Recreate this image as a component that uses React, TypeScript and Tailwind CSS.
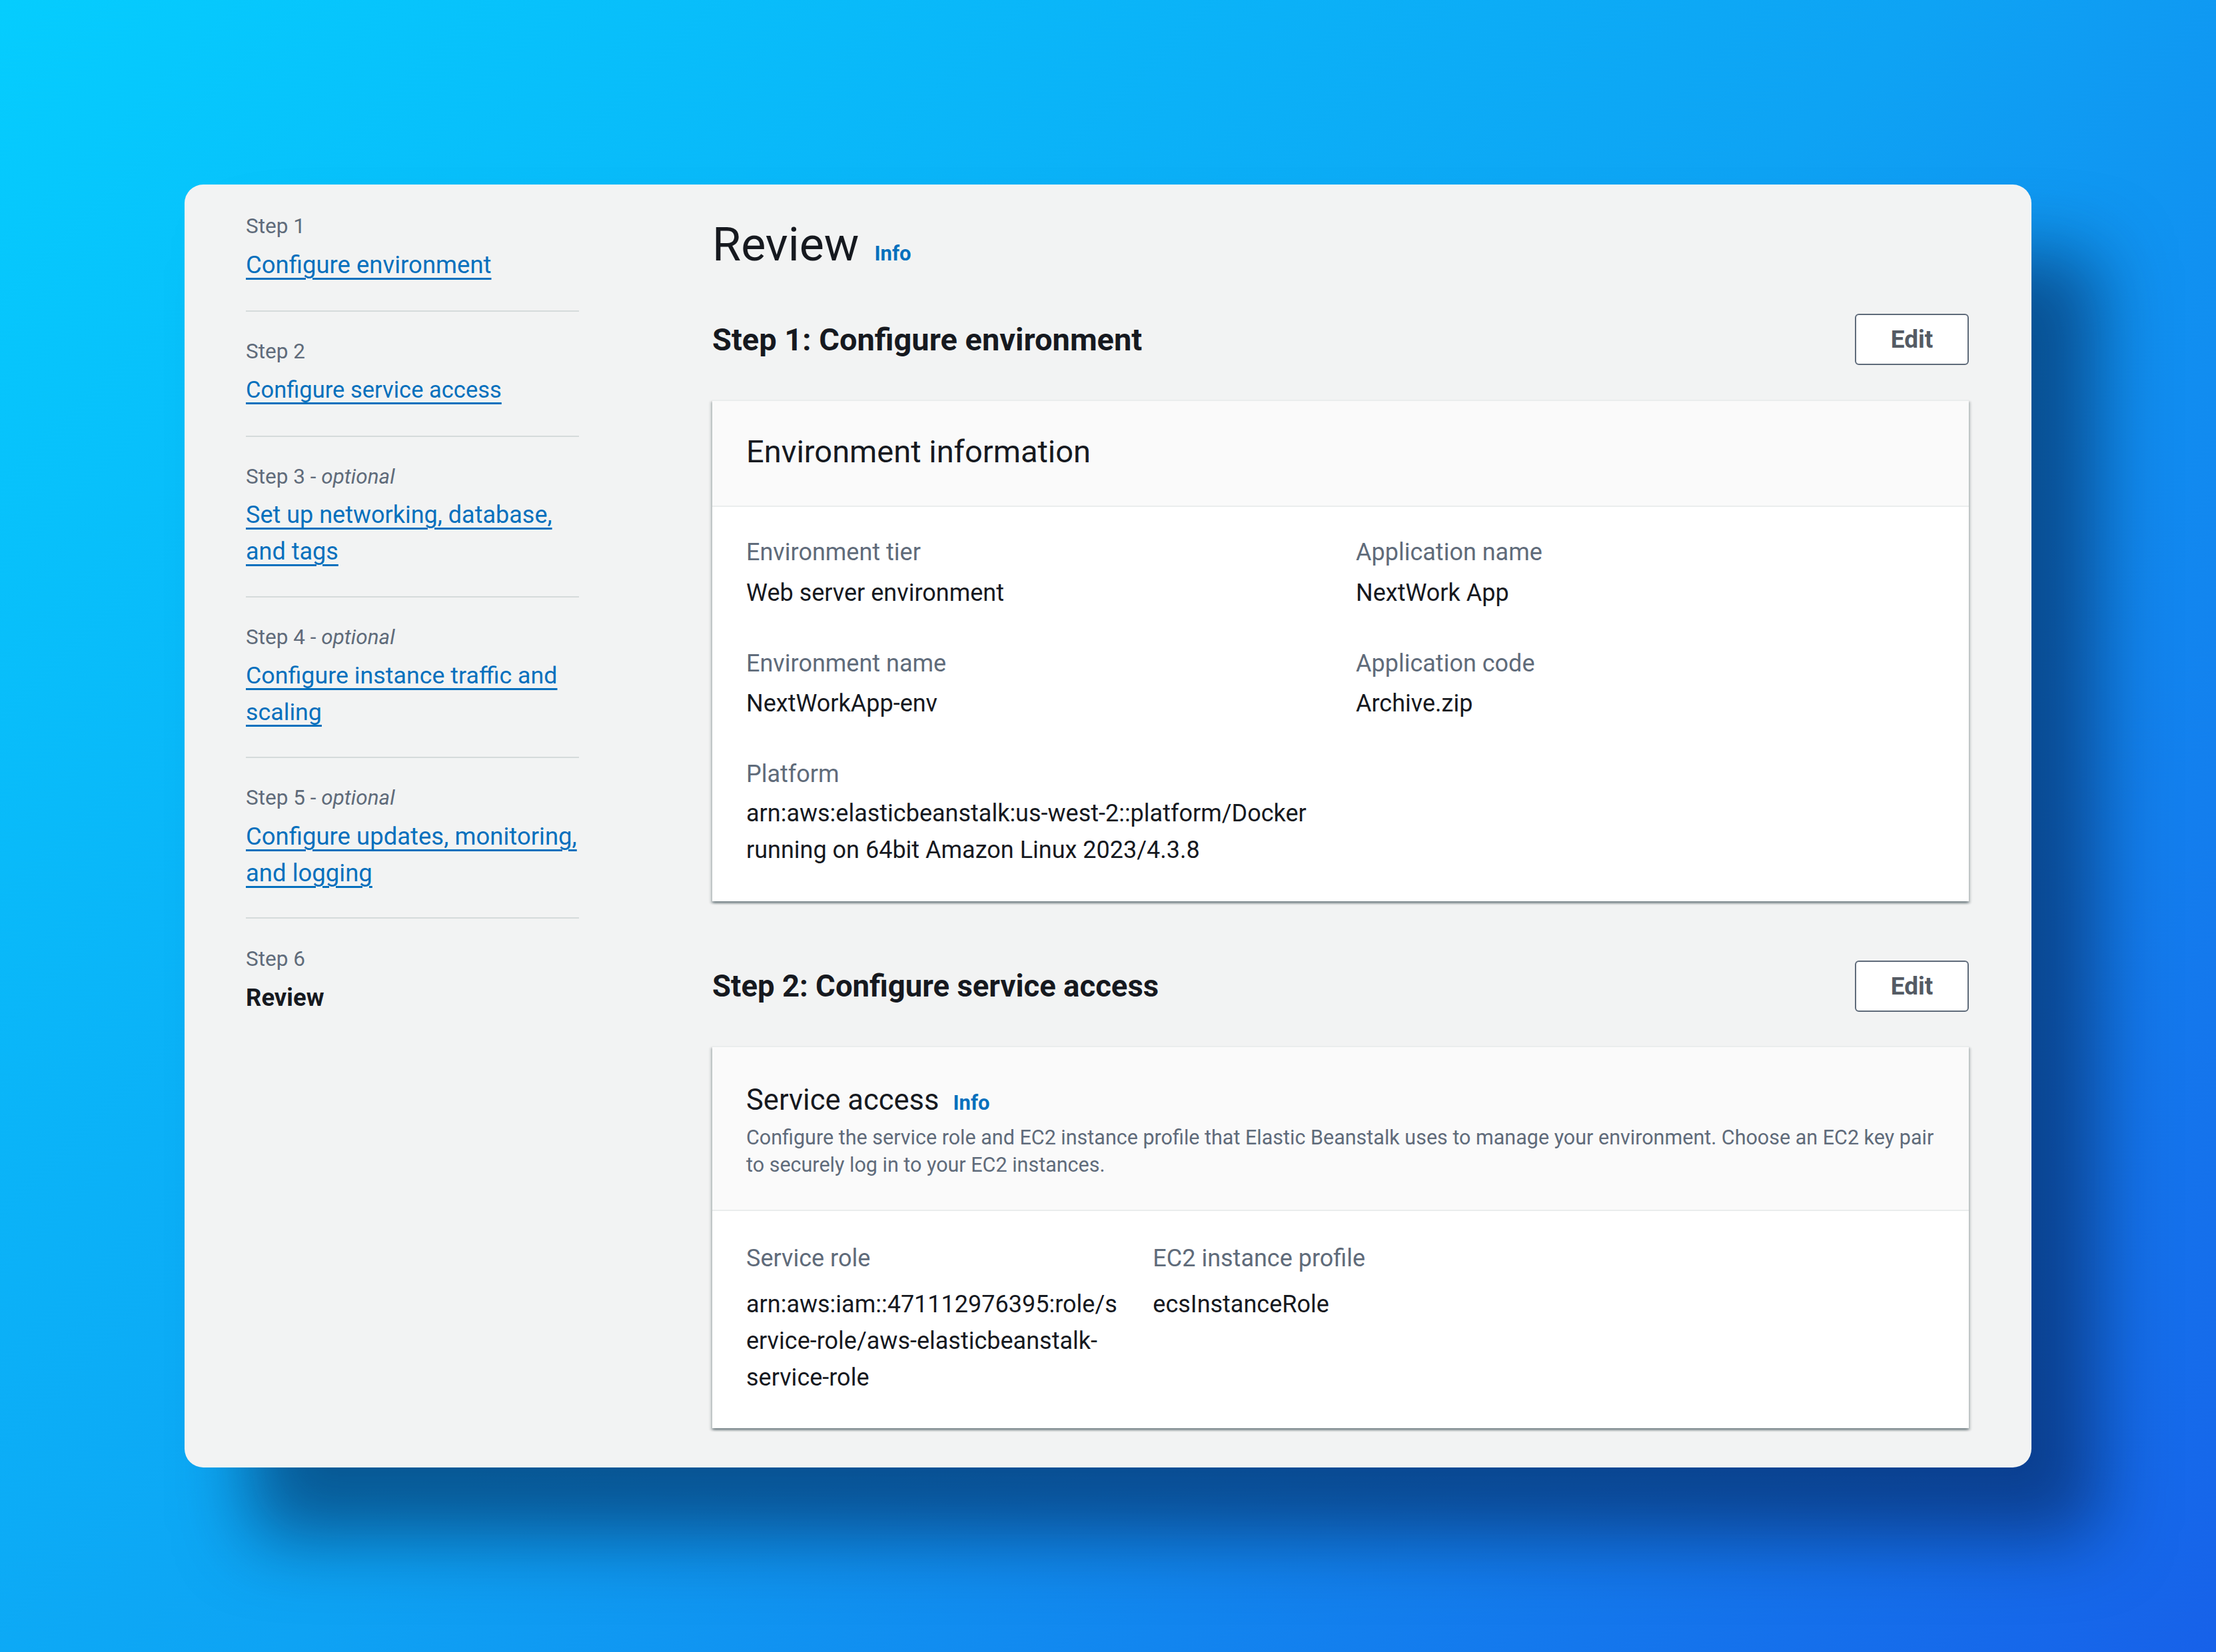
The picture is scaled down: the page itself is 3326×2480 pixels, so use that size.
import React from "react";

type NavItem = {
  step: string;
  optional?: boolean;
  lines: string[];
  current?: boolean;
  size: string;
};

const navItems: NavItem[] = [
  { step: "Step 1", lines: ["Configure environment"], size: "text-[36.5px]" },
  { step: "Step 2", lines: ["Configure service access"], size: "text-[34.5px]" },
  { step: "Step 3", optional: true, lines: ["Set up networking, database,", "and tags"], size: "text-[36px]" },
  { step: "Step 4", optional: true, lines: ["Configure instance traffic and", "scaling"], size: "text-[35.8px]" },
  { step: "Step 5", optional: true, lines: ["Configure updates, monitoring,", "and logging"], size: "text-[36.5px]" },
  { step: "Step 6", lines: ["Review"], current: true, size: "text-[36.5px]" },
];

function SideNav() {
  return (
    <nav className="w-[792px] shrink-0 pl-[92px] pt-[41px]">
      <ul className="w-[500px]">
        {navItems.map((item, i) => {
          const last = i === navItems.length - 1;
          const multi = item.lines.length > 1;
          const pad = last
            ? "pt-[39px]"
            : (i === 0 ? "" : "pt-[38px] ") +
              (multi ? "pb-[39px]" : "pb-[41px]") +
              " border-b-2 border-[#d5dbdb]";
          return (
            <li key={item.step} className={pad}>
              <div className="text-[31.5px] leading-[44px] text-[#5f6b7a] whitespace-nowrap">
                {item.step}
                {item.optional ? (
                  <>
                    {" - "}
                    <i>optional</i>
                  </>
                ) : null}
              </div>
              <div className={"mt-[8px] leading-[55px] whitespace-nowrap " + item.size}>
                {item.current ? (
                  <span className="font-bold text-[#16191f]">{item.lines[0]}</span>
                ) : (
                  <a
                    href="#"
                    className="text-[#0670bd] underline decoration-3 underline-offset-[7px]"
                  >
                    {item.lines.map((l, j) => (
                      <React.Fragment key={j}>
                        {j > 0 ? <br /> : null}
                        {l}
                      </React.Fragment>
                    ))}
                  </a>
                )}
              </div>
            </li>
          );
        })}
      </ul>
    </nav>
  );
}

function EditButton() {
  return (
    <button className="w-[171px] h-[77px] shrink-0 rounded-[6px] border-2 border-[#5f6b7a] bg-white text-[37px] font-bold text-[#545b64] leading-none">
      Edit
    </button>
  );
}

function StepHeader({ title, className, size }: { title: string; className: string; size: string }) {
  return (
    <div className={"flex items-center justify-between h-[77px] " + className}>
      <h2 className={"leading-[60px] font-bold text-[#16191f] whitespace-nowrap " + size}>{title}</h2>
      <EditButton />
    </div>
  );
}

const containerCls =
  "bg-white border-t-2 border-[#eaeded] shadow-[0_3px_3px_0_rgba(0,28,36,0.3),3px_3px_3px_0_rgba(0,28,36,0.15),-3px_3px_3px_0_rgba(0,28,36,0.15)]";

function KV({ label, lines, gap }: { label: string; lines: string[]; gap: string }) {
  return (
    <div>
      <div className="text-[36px] leading-[44px] text-[#5f6b7a] whitespace-nowrap">{label}</div>
      <div className={"text-[36px] leading-[55px] text-[#16191f] whitespace-nowrap " + gap}>
        {lines.map((l, j) => (
          <div key={j}>{l}</div>
        ))}
      </div>
    </div>
  );
}

export default function App() {
  return (
    <div className="w-[3326px] h-[2480px] p-[277px] bg-[linear-gradient(135deg,#05cdfe_0%,#0ea3f4_50%,#1761e9_100%)] font-['Roboto',sans-serif]">
      <div className="w-full h-full rounded-[28px] bg-[#f2f3f3] flex shadow-[100px_105px_110px_0_rgba(4,25,70,0.55)]">
        <SideNav />
        <main className="flex-1 min-w-0 pr-[94px] pt-[50px]">
          <div className="flex items-baseline gap-[23px] h-[80px]">
            <h1 className="text-[70px] leading-[80px] text-[#16191f]">Review</h1>
            <a href="#" className="text-[31px] font-bold text-[#0670bd]">
              Info
            </a>
          </div>

          <StepHeader title="Step 1: Configure environment" className="mt-[64px]" size="text-[47px]" />

          <section className={"mt-[52px] " + containerCls}>
            <div className="bg-[#fafafa] px-[51px] pt-[46px] pb-[51px] border-b-2 border-[#eaeded]">
              <h3 className="text-[47px] leading-[60px] text-[#16191f]">Environment information</h3>
            </div>
            <div className="px-[51px] pt-[46px] pb-[49px] grid grid-cols-2 gap-x-[46px] gap-y-[56px]">
              <KV label="Environment tier" lines={["Web server environment"]} gap="mt-[12px]" />
              <KV label="Application name" lines={["NextWork App"]} gap="mt-[12px]" />
              <KV label="Environment name" lines={["NextWorkApp-env"]} gap="mt-[11px]" />
              <KV label="Application code" lines={["Archive.zip"]} gap="mt-[11px]" />
              <KV
                label="Platform"
                lines={[
                  "arn:aws:elasticbeanstalk:us-west-2::platform/Docker",
                  "running on 64bit Amazon Linux 2023/4.3.8",
                ]}
                gap="mt-[10px]"
              />
            </div>
          </section>

          <StepHeader title="Step 2: Configure service access" className="mt-[89px]" size="text-[45.5px]" />

          <section className={"mt-[51px] " + containerCls}>
            <div className="bg-[#fafafa] px-[51px] pt-[50px] pb-[47px] border-b-2 border-[#eaeded]">
              <div className="flex items-baseline gap-[21px]">
                <h3 className="text-[43.5px] leading-[60px] text-[#16191f]">Service access</h3>
                <a href="#" className="text-[31px] font-bold text-[#0670bd]">
                  Info
                </a>
              </div>
              <p className="mt-[5px] text-[30.5px] leading-[41px] text-[#5f6b7a] whitespace-nowrap">
                Configure the service role and EC2 instance profile that Elastic Beanstalk uses to manage your
                environment. Choose an EC2 key pair
                <br />
                to securely log in to your EC2 instances.
              </p>
            </div>
            <div className="px-[51px] pt-[49px] pb-[48px] grid grid-cols-3 gap-x-[47px]">
              <KV
                label="Service role"
                lines={["arn:aws:iam::471112976395:role/s", "ervice-role/aws-elasticbeanstalk-", "service-role"]}
                gap="mt-[20px]"
              />
              <KV label="EC2 instance profile" lines={["ecsInstanceRole"]} gap="mt-[20px]" />
            </div>
          </section>
        </main>
      </div>
    </div>
  );
}
